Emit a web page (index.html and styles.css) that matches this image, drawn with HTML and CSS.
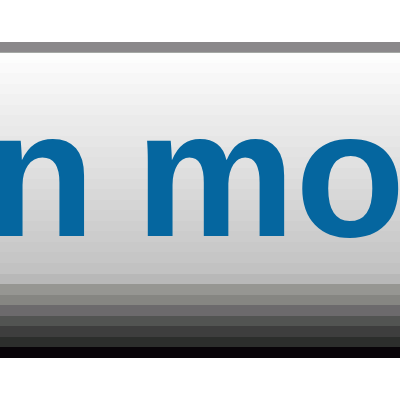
FILE: index.html
```html
<!DOCTYPE html>
<html>
<head>
<meta charset="utf-8">
<link rel="stylesheet" href="styles.css">
</head>
<body>
<div class="page">
  <div class="button">
    <span class="label">Learn more</span>
  </div>
</div>
</body>
</html>
```
FILE: styles.css
```css
html, body {
  margin: 0;
  padding: 0;
  background: #ffffff;
}
.page {
  width: 400px;
  height: 400px;
  padding-top: 42px;
  box-sizing: border-box;
  overflow: hidden;
}
.button {
  height: 306px;
  border-top: 10px solid #8a888a;
  box-shadow: inset 0 1px 0 #a4a8a4;
  overflow: hidden;
  white-space: nowrap;
  padding-top: 31.6px;
  box-sizing: content-box;
  height: 274.4px;
  background: linear-gradient(to bottom,
    #fcfdfc 0px, #fcfdfc 10.55px,
    #fafafa 10.55px, #fafafa 21.1px,
    #f7f7f7 21.1px, #f7f7f7 31.65px,
    #f4f4f4 31.65px, #f4f4f4 42.2px,
    #f1f1f1 42.2px, #f1f1f1 52.75px,
    #eeeeee 52.75px, #eeeeee 63.3px,
    #ebebeb 63.3px, #ebebeb 73.85px,
    #e9e9e9 73.85px, #e9e9e9 84.4px,
    #e6e6e6 84.4px, #e6e6e6 94.95px,
    #e3e3e3 94.95px, #e3e3e3 105.5px,
    #e1e1e1 105.5px, #e1e1e1 116.05px,
    #dedede 116.05px, #dedede 126.6px,
    #dbdbdb 126.6px, #dbdbdb 137.15px,
    #d8d8d8 137.15px, #d8d8d8 147.7px,
    #d5d5d5 147.7px, #d5d5d5 158.25px,
    #d2d2d2 158.25px, #d2d2d2 168.8px,
    #cfcfcf 168.8px, #cfcfcf 179.35px,
    #cccccc 179.35px, #cccccc 189.9px,
    #c9c9c9 189.9px, #c9c9c9 200.45px,
    #c6c6c6 200.45px, #c6c6c6 211px,
    #c2c2c2 211px, #c2c2c2 221.55px,
    #b8b8b8 221.55px, #b8b8b8 232.1px,
    #969692 232.1px, #969692 242.65px,
    #868682 242.65px, #868682 253.2px,
    #6c6a6c 253.2px, #6c6a6c 263.75px,
    #525452 263.75px, #525452 274.3px,
    #3e3e3e 274.3px, #3e3e3e 284.85px,
    #2c2e2c 284.85px, #2c2e2c 295.4px,
    #080408 295.4px, #080408 306px);
}
.label {
  display: block;
  margin-left: -395px;
  font-family: "Liberation Sans", Arial, sans-serif;
  font-weight: bold;
  font-size: 180px;
  line-height: 180px;
  word-spacing: -10px;
  color: #05669f;
}
```
